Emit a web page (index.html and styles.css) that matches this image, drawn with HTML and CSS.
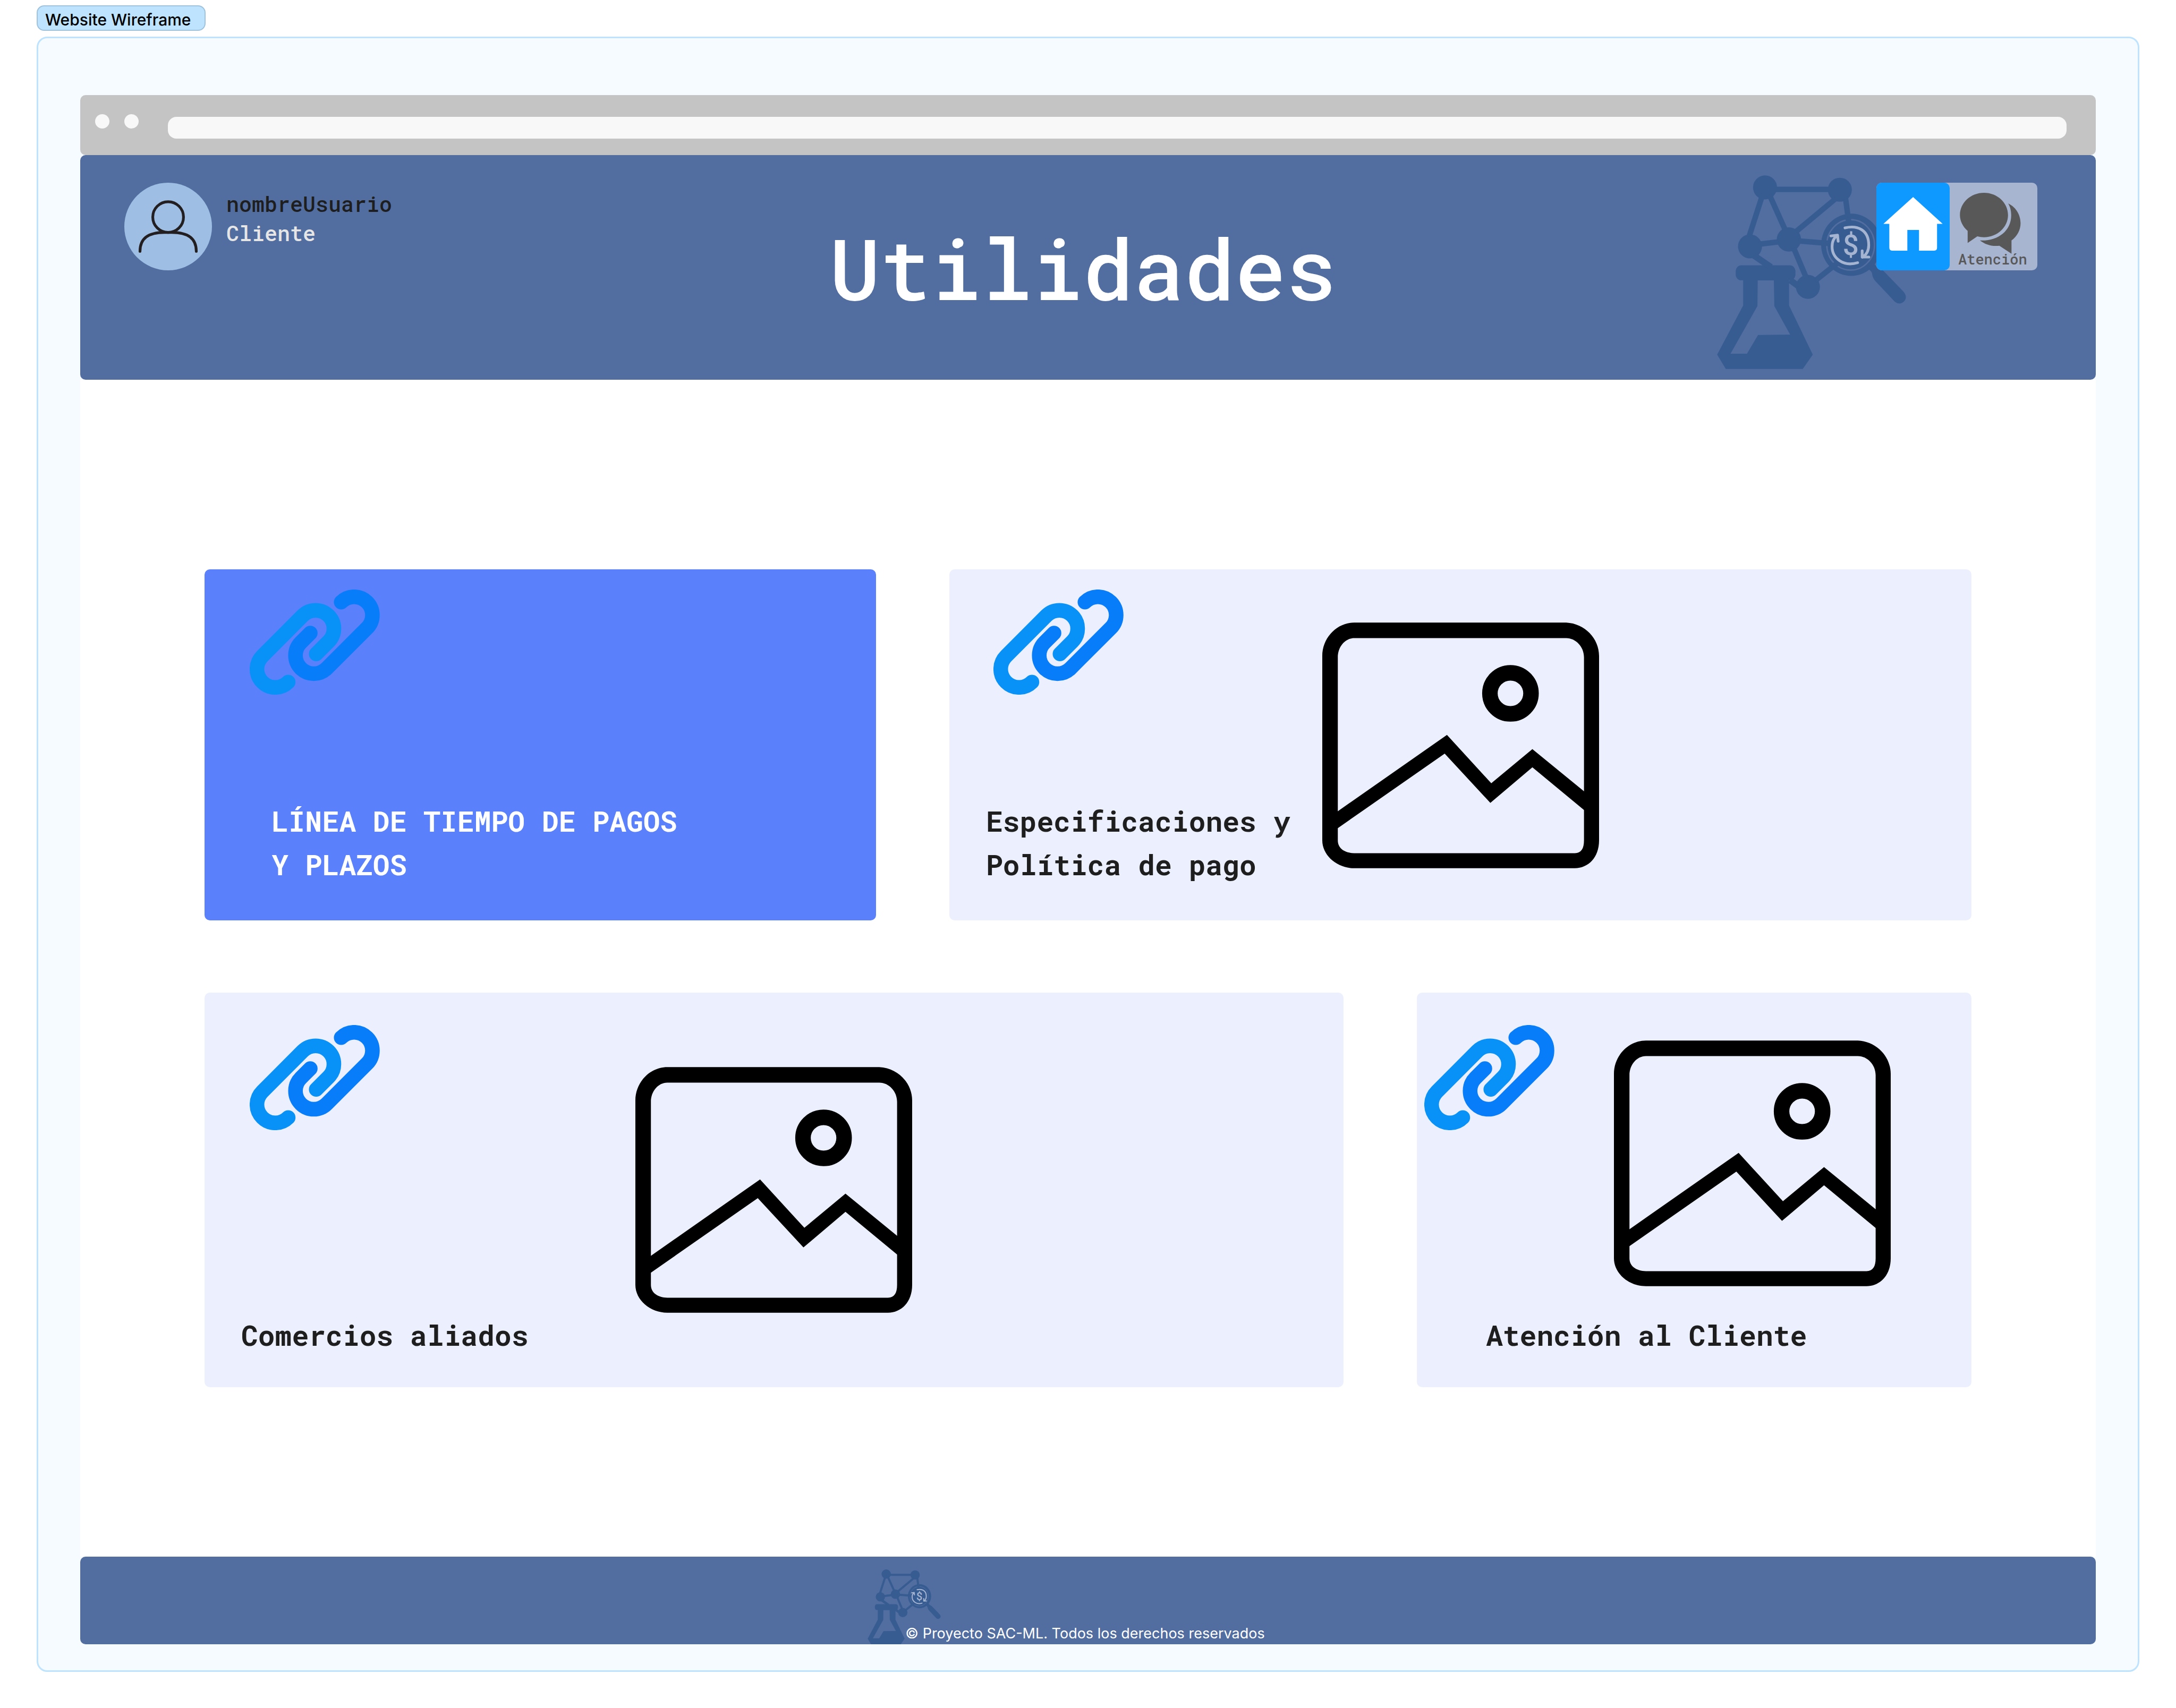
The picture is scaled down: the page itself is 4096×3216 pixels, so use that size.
FILE: index.html
```html
<!DOCTYPE html>
<html lang="es">
<head>
<meta charset="utf-8">
<meta name="viewport" content="width=device-width, initial-scale=1">
<title>Utilidades</title>
<link rel="stylesheet" href="styles.css">
</head>
<body>
<svg class="symbols" aria-hidden="true">
  <symbol id="logo" viewBox="35 26 1244 1275">
    <g fill="#375c91" stroke="none">
      <circle cx="351" cy="106" r="79"/>
      <circle cx="843" cy="121" r="79"/>
      <circle cx="252" cy="494" r="79"/>
      <circle cx="508" cy="448" r="80"/>
      <circle cx="633" cy="760" r="79"/>
      <ellipse cx="918" cy="483" rx="198" ry="205"/>
      <path d="M1035 648 L1070 610 Q1085 632 1130 655 L1262 792 Q1291 828 1265 856 Q1238 883 1205 858 L1075 720 Q1058 700 1055 672 Q1050 655 1035 648Z"/>
      <rect x="158" y="618" width="393" height="99" rx="38"/>
      <path fill-rule="evenodd" d="M207 700V883L36 1206L93 1300H599L665 1206L509 883V700ZM303 717H409L412 886L516 1074L305 1077L232 1200H124L301 886Z"/>
    </g>
    <ellipse cx="914" cy="484" rx="157" ry="166" fill="none" stroke="#526ea0" stroke-width="9"/>
    <g fill="none" stroke="#375c91" stroke-width="36">
      <path d="M351 119H843M336 150L246 430M380 155L488 395M815 180L555 396M881 180L902 340M310 480L440 464M570 458L775 474M540 505L622 700M680 720L835 597"/>
      <path d="M280 555L390 630M515 715L570 755" stroke-width="42"/>
    </g>
    <g fill="none" stroke="#a5b5d1" stroke-width="18" stroke-linecap="round" stroke-linejoin="round">
      <path d="M877 372C960 353 1033 385 1033 485C1033 520 1018 548 992 565M990 523V564H1034"/>
      <path d="M960 601C865 630 792 570 792 495C792 462 805 436 828 422M784 425L828 420L832 460"/>
    </g>
    <text x="915" y="551" class="logo-sign" text-anchor="middle">$</text>
  </symbol>
  <symbol id="link" viewBox="22 20 855 691">
    <g fill="none" stroke-width="96" stroke-linecap="round">
      <path stroke="#0892f7" d="M459 443L540 362A120 120 0 0 0 370 192L105 458A120 120 0 0 0 275 628"/>
      <path stroke="#087df9" d="M420 306L358 368A120 120 0 0 0 528 538L793 273A120 120 0 0 0 623 103"/>
    </g>
  </symbol>
  <symbol id="picture" viewBox="0 0 606 538">
    <path fill-rule="evenodd" d="M70 0H534C575 2 606 35 606 73V477C606 515 582 538 553 538H70C32 538 0 510 0 477V73C0 33 32 0 70 0ZM70 34C50 34 34 53 34 76V477C34 495 50 505 70 505H553C567 505 573 495 573 477V76C573 53 555 34 534 34Z"/>
    <circle cx="412" cy="155" r="45" fill="none" stroke="#000" stroke-width="34"/>
    <path d="M30 416L273 246L370 352L460 277L576 372V413L460 317L368 395L268 287L30 453Z"/>
  </symbol>
</svg>

<div class="board">
  <p class="board-label">Website Wireframe</p>
  <div class="frame">
    <div class="chrome">
      <span class="dot"></span>
      <span class="dot"></span>
      <input class="address" type="text" aria-label="Dirección">
    </div>

    <header class="header">
      <svg class="header-logo" aria-hidden="true"><use href="#logo"/></svg>
      <div class="user">
        <svg class="avatar" viewBox="36 30 576 576" aria-hidden="true">
          <circle cx="324" cy="318" r="288" fill="#9ebfe3"/>
          <g fill="none" stroke="#231f20" stroke-width="18" stroke-linecap="round">
            <circle cx="324" cy="256" r="101"/>
            <path d="M139 481C139 395 195 357 300 357H348C453 357 509 395 509 481"/>
          </g>
        </svg>
        <div class="user-text">
          <span class="user-name">nombreUsuario</span>
          <span class="user-role">Cliente</span>
        </div>
      </div>
      <h1 class="title">Utilidades</h1>
      <nav class="nav">
        <a class="nav-home" href="#" aria-label="Inicio">
          <svg class="home-icon" viewBox="80 153 391 354" aria-hidden="true"><path fill="#fff" d="M276 153L471 330H434V488Q434 507 415 507H315V370H238V507H138Q119 507 119 488V330H80Z"/></svg>
        </a>
        <a class="nav-help" href="#">
          <svg class="chat-icon" viewBox="582 126 402 404" aria-hidden="true">
            <g fill="#585858">
              <path d="M633 378C600 350 582 312 582 273C582 192 653 126 741 126S900 192 900 273S829 420 741 420Q718 420 697 414L633 458Z"/>
              <path d="M901 196C960 225 983 280 983 327C983 372 960 415 923 441V529L843 476C790 482 750 468 714 441C830 447 921 380 921 275C921 245 915 220 901 196Z"/>
            </g>
          </svg>
          <span>Atención</span>
        </a>
      </nav>
    </header>

    <main class="content">
      <div class="row row-top">
        <a class="tile tile-timeline" href="#">
          <svg class="tile-link" aria-hidden="true"><use href="#link"/></svg>
          <h2 class="tile-title">LÍNEA DE TIEMPO DE PAGOS<br>Y PLAZOS</h2>
        </a>
        <a class="tile tile-policy" href="#">
          <svg class="tile-link" aria-hidden="true"><use href="#link"/></svg>
          <svg class="tile-picture" aria-hidden="true"><use href="#picture"/></svg>
          <h2 class="tile-title">Especificaciones y<br>Política de pago</h2>
        </a>
      </div>
      <div class="row row-bottom">
        <a class="tile tile-shops" href="#">
          <svg class="tile-link" aria-hidden="true"><use href="#link"/></svg>
          <svg class="tile-picture" aria-hidden="true"><use href="#picture"/></svg>
          <h2 class="tile-title">Comercios aliados</h2>
        </a>
        <a class="tile tile-support" href="#">
          <svg class="tile-link" aria-hidden="true"><use href="#link"/></svg>
          <svg class="tile-picture" aria-hidden="true"><use href="#picture"/></svg>
          <h2 class="tile-title">Atención al Cliente</h2>
        </a>
      </div>
    </main>

    <footer class="footer">
      <p class="copyright">
        <svg class="footer-logo" aria-hidden="true"><use href="#logo"/></svg>
        <span>© Proyecto SAC-ML. Todos los derechos reservados</span>
      </p>
    </footer>
  </div>
</div>
</body>
</html>
```
FILE: styles.css
```css
* {
  box-sizing: border-box;
}

body {
  margin: 0;
  background: #fff;
  color: #1e1e1e;
  font-family: "Roboto Mono", "DejaVu Sans Mono", monospace;
}

h1, h2, p {
  margin: 0;
}

a {
  color: inherit;
  text-decoration: none;
}

svg {
  display: block;
}

.symbols {
  display: none;
}

.logo-sign {
  fill: #a5b5d1;
  font: 500 185px Roboto, sans-serif;
}

.board {
  padding: 10px 69px 68px;
}

.board-label {
  width: fit-content;
  height: 48px;
  margin-bottom: 11px;
  padding: 2px 26px 0 14px;
  border: 2px solid #9fc3dd;
  border-radius: 14px;
  background: #bde3ff;
  color: #000;
  font: 500 30px/46px Inter, sans-serif;
}

.frame {
  padding: 107px 79px 49px;
  border: 3px solid #bde3ff;
  border-radius: 20px;
  background: #f5fbff;
}

.chrome {
  display: flex;
  align-items: flex-start;
  gap: 28px;
  padding: 36px 55px 31px 28px;
  border-radius: 10px;
  background: #c4c4c4;
}

.dot {
  width: 27px;
  height: 27px;
  border-radius: 50%;
  background: #f8f8f8;
}

.address {
  flex: 1;
  height: 41px;
  margin: 5px 0 0 27px;
  padding: 0 16px;
  border: 0;
  border-radius: 16px;
  background: #f8f8f8;
  font: 24px Inter, sans-serif;
}

.header {
  position: relative;
  display: grid;
  grid-template-columns: 1fr auto 1fr;
  align-items: start;
  min-height: 423px;
  padding: 52px 110px 52px 83px;
  border-radius: 10px;
  background: #526ea0;
}

.header-logo {
  position: absolute;
  top: 38px;
  right: 357px;
  width: 356px;
  height: 365px;
}

.user {
  display: flex;
  gap: 27px;
}

.avatar {
  width: 165px;
  height: 165px;
}

.user-text {
  display: flex;
  flex-direction: column;
  padding-top: 12px;
  font-size: 40px;
  font-weight: 500;
  line-height: 55px;
}

.user-role {
  color: #e6e6e6;
}

.title {
  padding: 64px 0 0 8px;
  color: #fff;
  font-size: 159px;
  font-weight: 500;
  line-height: 190px;
}

.nav {
  position: relative;
  display: flex;
  justify-self: end;
  border-radius: 10px;
  background: #a8b5d0;
}

.nav-home {
  height: 165px;
  padding: 27px 13px;
  border-radius: 10px;
  background: #0d99ff;
}

.home-icon {
  width: 112px;
  height: 101px;
}

.nav-help {
  width: 165px;
  padding: 19px 0 0 16px;
  color: #585858;
  font-size: 27px;
  font-weight: 500;
  line-height: 20px;
}

.chat-icon {
  width: 115px;
  height: 115px;
  margin-left: 3px;
}

.content {
  display: flex;
  flex-direction: column;
  gap: 136px;
  padding: 357px 234px 319px;
  background: #fff;
}

.row {
  display: grid;
  gap: 138px;
}

.row-top {
  grid-template-columns: 1264fr 1924fr;
}

.row-bottom {
  grid-template-columns: 2144fr 1044fr;
}

.tile {
  display: grid;
  grid-template-rows: 1fr auto;
  align-items: start;
  min-height: 661px;
  padding-bottom: 65px;
  border-radius: 10px;
  background: #ecf0fe;
}

.row-bottom .tile {
  min-height: 743px;
  padding-bottom: 58px;
}

.tile-link {
  grid-area: 1 / 1;
  width: 245px;
  height: 198px;
  margin: 38px 0 0 85px;
}

.tile-picture {
  grid-area: 1 / 2 / 3 / 3;
  width: 521px;
  height: 463px;
}

.tile-title {
  grid-area: 2 / 1 / 3 / 3;
  padding-left: 69px;
  font-size: 53px;
  font-weight: 700;
  line-height: 82px;
}

.row-bottom .tile-link {
  margin-top: 61px;
}

.tile-timeline {
  background: #5a80fc;
  color: #fff;
}

.tile-timeline .tile-title {
  padding-left: 126px;
}

.tile-policy {
  grid-template-columns: 702px 1fr;
}

.tile-policy .tile-link {
  margin-left: 83px;
}

.tile-policy .tile-picture {
  margin-top: 100px;
}

.tile-shops {
  grid-template-columns: 811px 1fr;
}

.tile-shops .tile-picture {
  margin-top: 140px;
}

.tile-support {
  grid-template-columns: 371px 1fr;
}

.tile-support .tile-picture {
  margin-top: 90px;
}

.row-bottom .tile-support .tile-link {
  margin-left: 14px;
}

.tile-support .tile-title {
  padding-left: 130px;
}

.footer {
  display: flex;
  justify-content: center;
  align-items: flex-end;
  min-height: 165px;
  padding: 0 11px 4px 0;
  border-radius: 10px;
  background: #526ea0;
  overflow: hidden;
}

.copyright {
  position: relative;
  color: #fff;
  font: 400 27px/32px Inter, sans-serif;
}

.copyright span {
  position: relative;
}

.footer-logo {
  position: absolute;
  bottom: -4px;
  left: -71px;
  width: 138px;
  height: 141px;
}
```
